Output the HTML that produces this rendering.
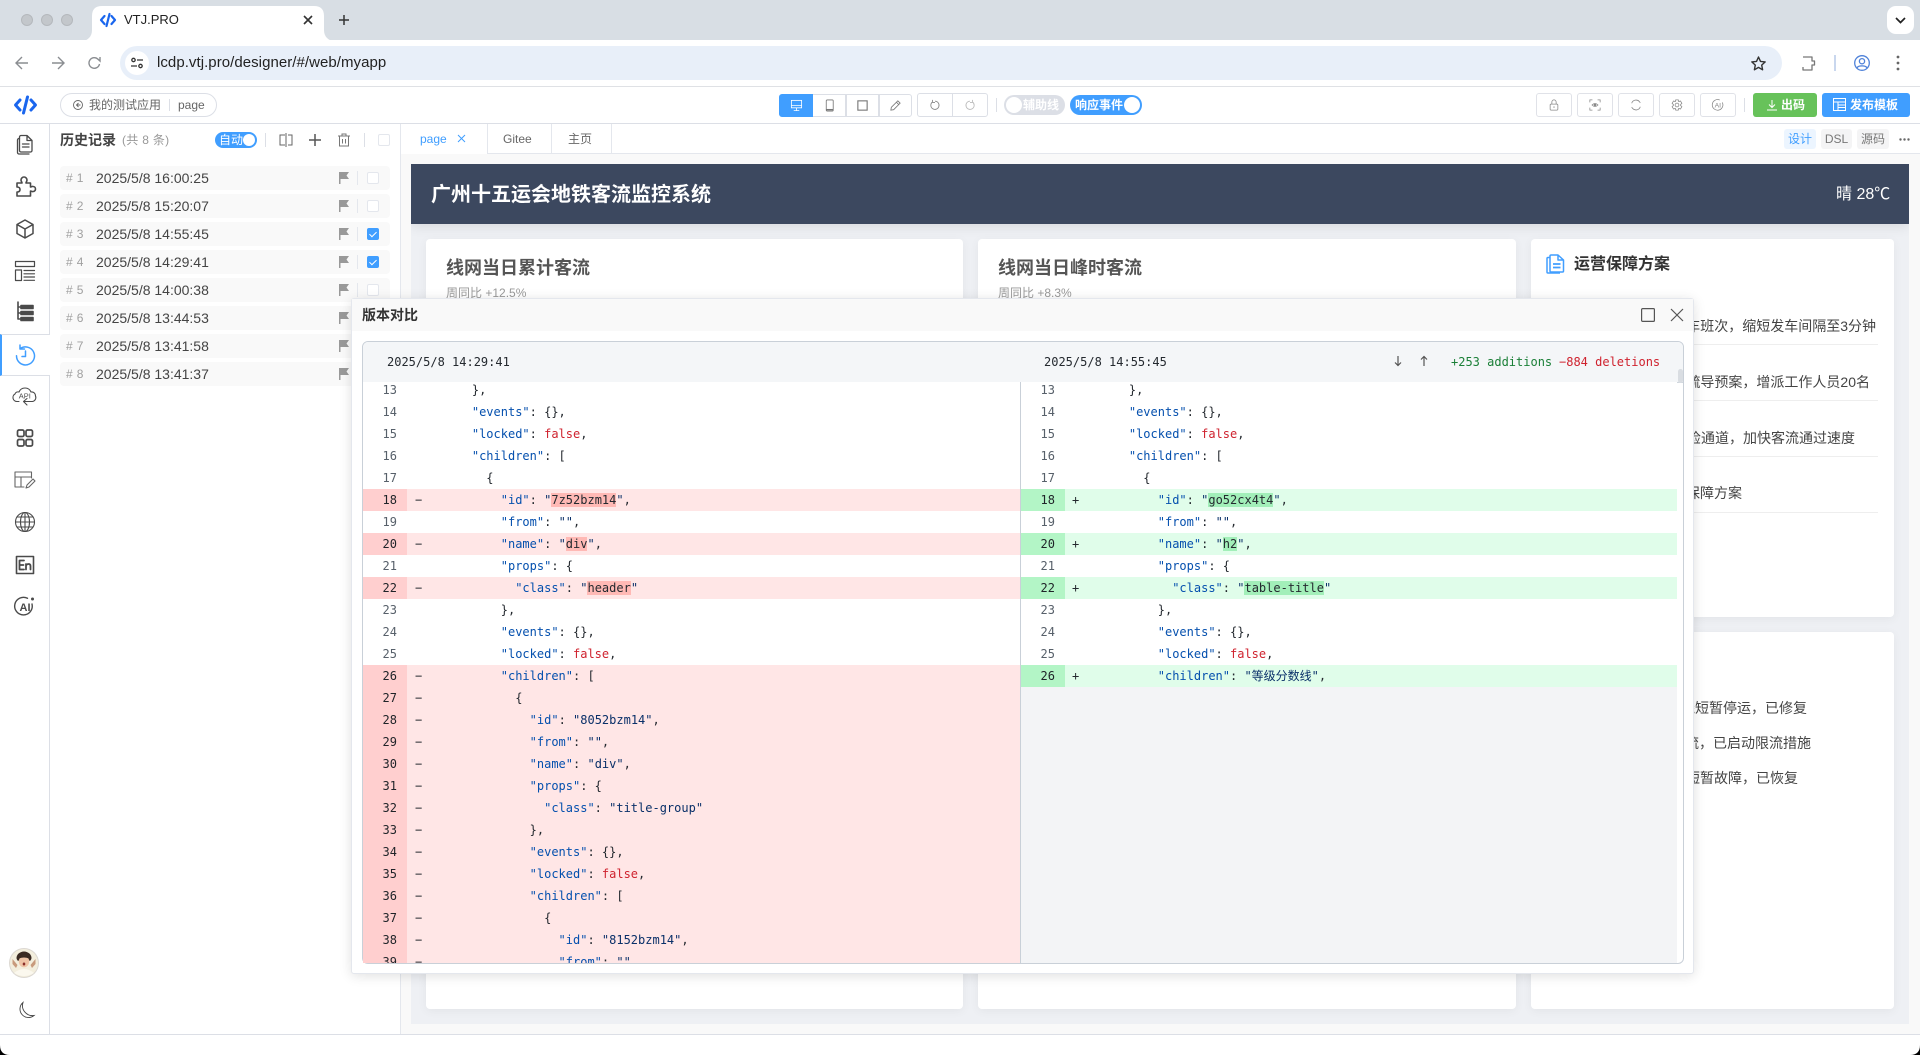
<!DOCTYPE html>
<html lang="zh"><head><meta charset="utf-8"><title>VTJ.PRO</title>
<style>
*{box-sizing:border-box}
html,body{margin:0;padding:0;width:1920px;height:1055px;overflow:hidden;background:#fff;font-family:"Liberation Sans","Noto Sans CJK SC",sans-serif;color:#333}
.a{position:absolute;white-space:nowrap}
svg{position:absolute;overflow:visible;fill:none;stroke:currentColor}
.ic{width:22px;height:22px;left:14px;color:#4a4a4a;stroke-width:1.3;stroke-linejoin:round;stroke-linecap:round}
.row{position:absolute;left:60px;width:330px;height:24px;background:#f9f9f9;border-radius:4px}
.row b{position:absolute;left:6px;top:0;font:12px/24px "Liberation Sans",sans-serif;color:#a0a0a0;font-weight:400;letter-spacing:.4px}
.row i{position:absolute;left:36px;top:0;font:14px/24px "Liberation Sans",sans-serif;color:#444}
.row svg{left:279px;top:6px;width:10px;height:12px;fill:#999;stroke:none}
.row s{position:absolute;left:297px;top:5px;width:1px;height:14px;background:#e4e7ed}
.row u{position:absolute;left:307px;top:6px;width:12px;height:12px;border:1px solid #e4e7ed;border-radius:2px;background:#fff}
.row u.c{background:#409eff;border-color:#409eff}
.row u.c:after{content:"";position:absolute;left:3px;top:1px;width:3px;height:6px;border:solid #fff;border-width:0 1px 1px 0;transform:rotate(45deg)}
.bt{position:absolute;top:93px;width:36px;height:24px;border:1px solid #e0e2e8;border-radius:3px;background:#fff;color:#888}
.bt svg{left:11px;top:5px;width:12px;height:12px;stroke-width:.9}
.gb{position:absolute;top:94px;height:23px;border:1px solid #dcdfe6;background:#fff;color:#777}
.gb svg{width:13px;height:13px;top:4px;left:10px;stroke-width:.9}
.card{position:absolute;background:#fff;border-radius:4px;box-shadow:0 2px 10px rgba(0,0,0,.05)}
.tt{font-size:18px;line-height:26px;font-weight:700;color:#555}
.sb{font-size:12px;line-height:16px;color:#999}
.ln{position:absolute;left:1545px;width:333px;height:1px;background:#eee}
.t14{font-size:14px;line-height:20px;color:#444;text-align:right}
.pane{position:absolute;top:382px;height:581px;overflow:hidden;font:12px/22px "DejaVu Sans Mono","Liberation Mono","Noto Sans CJK SC",monospace;color:#24292f}
.l{position:relative;height:22px;white-space:pre;background:#fff}
.l>em{position:absolute;top:0;left:0;width:44px;height:22px;font-style:normal;text-align:right;padding-right:10px;color:#57606a}
.l>u{position:absolute;top:0;left:52px;text-decoration:none}
.l>span{position:absolute;top:0;left:65.5px}
.rp .l>span{left:64.500px}
.rp .l>u{left:51px}
.d{background:#ffe6e6}.d>em{background:#ffcfcf;color:#1f2328}
.p{background:#e0fdea}.p>em{background:#b3f5c6;color:#1f2328}
.k{color:#0550ae}.s{color:#0a3069}.f{color:#cf222e}
.hd{background:#ffb9b5;color:#24292f}.ha{background:#a2efb9;color:#24292f}
</style></head><body>

<!-- chrome -->
<div class="a" style="left:0;top:0;width:1920px;height:40px;background:#d8dee4"></div>
<div class="a" style="left:21px;top:14px;width:12px;height:12px;border-radius:50%;background:#c3c7cb;border:1px solid #b4b8bc"></div>
<div class="a" style="left:41px;top:14px;width:12px;height:12px;border-radius:50%;background:#c3c7cb;border:1px solid #b4b8bc"></div>
<div class="a" style="left:61px;top:14px;width:12px;height:12px;border-radius:50%;background:#c3c7cb;border:1px solid #b4b8bc"></div>
<div class="a" style="left:0;top:40px;width:1920px;height:47px;background:#fff;border-radius:10px 10px 0 0;border-bottom:1px solid #dfe1e5"></div>
<svg style="left:80px;top:6px;width:256px;height:36px;stroke:none;fill:#fff" viewBox="0 0 256 36"><path d="M0 36 Q12 34 12 24 V10 Q12 0 22 0 H234 Q244 0 244 10 V24 Q244 34 256 36Z"/></svg>
<svg style="left:100px;top:12px;width:16px;height:16px;color:#1a66ee;stroke-width:2.2;stroke-linecap:round;stroke-linejoin:round" viewBox="0 0 16 16"><path d="M4.5 4 L1 8 L4.5 12 M11.5 4 L15 8 L11.5 12 M9.5 2 L6.5 14"/></svg>
<div class="a" style="left:124px;top:12px;font-size:13px;line-height:16px;color:#222">VTJ.PRO</div>
<svg style="left:304px;top:16px;width:8px;height:8px;color:#333;stroke-width:1.6" viewBox="0 0 8 8"><path d="M0 0L8 8M8 0L0 8"/></svg>
<svg style="left:339px;top:15px;width:10px;height:10px;color:#333;stroke-width:1.5" viewBox="0 0 10 10"><path d="M5 0V10M0 5H10"/></svg>
<div class="a" style="left:1887px;top:6px;width:27px;height:28px;background:#fff;border-radius:9px"></div>
<svg style="left:1896px;top:18px;width:9px;height:5px;color:#222;stroke-width:1.7" viewBox="0 0 9 5"><path d="M0 0L4.5 4.5L9 0"/></svg>

<svg style="left:15px;top:56px;width:14px;height:14px;color:#8a8d91;stroke-width:1.4" viewBox="0 0 14 14"><path d="M13 7H1M7 1L1 7L7 13"/></svg>
<svg style="left:51px;top:56px;width:14px;height:14px;color:#8a8d91;stroke-width:1.4" viewBox="0 0 14 14"><path d="M1 7H13M7 1L13 7L7 13"/></svg>
<svg style="left:88px;top:56px;width:13px;height:14px;color:#8a8d91;stroke-width:1.4" viewBox="0 0 13 14"><path d="M11.5 8A5.3 5.3 0 1 1 10 3.2L12 5V1"/></svg>
<div class="a" style="left:120px;top:46px;width:1662px;height:34px;background:#e8eff9;border-radius:17px"></div>
<div class="a" style="left:125px;top:51px;width:24px;height:24px;border-radius:50%;background:#fff"></div>
<svg style="left:131px;top:57px;width:12px;height:12px;color:#333;stroke-width:1.3" viewBox="0 0 12 12"><circle cx="2.5" cy="3" r="1.7"/><path d="M6 3H12M0 9H6"/><circle cx="9.5" cy="9" r="1.7"/></svg>
<div class="a" style="left:157px;top:54px;font-size:15px;line-height:18px;color:#222;letter-spacing:.05px">lcdp.vtj.pro/designer/#/web/myapp</div>
<svg style="left:1751px;top:56px;width:15px;height:15px;color:#333;stroke-width:1.4;stroke-linejoin:round" viewBox="0 0 15 15"><path d="M7.5 1L9.5 5.4L14.2 5.9L10.7 9.1L11.6 13.8L7.5 11.4L3.4 13.8L4.3 9.1L.8 5.9L5.5 5.4Z"/></svg>
<svg style="left:1801px;top:55px;width:16px;height:16px;color:#777;stroke-width:1.3;stroke-linejoin:round" viewBox="0 0 16 16"><path d="M2 2H11V6H13.500V10H11V15H2V12"/></svg>
<div class="a" style="left:1834px;top:55px;width:2px;height:16px;background:#c9d7ee"></div>
<svg style="left:1854px;top:55px;width:16px;height:16px;color:#4f82d9;stroke-width:1.3" viewBox="0 0 16 16"><circle cx="8" cy="8" r="7.3"/><circle cx="8" cy="6.2" r="2.6"/><path d="M3 13C4 10.2 12 10.2 13 13"/></svg>
<svg style="left:1896px;top:55px;width:4px;height:16px;stroke:none;fill:#666" viewBox="0 0 4 16"><circle cx="2" cy="2" r="1.4"/><circle cx="2" cy="8" r="1.4"/><circle cx="2" cy="14" r="1.4"/></svg>

<!-- app header -->
<div class="a" style="left:0;top:123px;width:1920px;height:1px;background:#dcdfe6"></div>
<svg style="left:14px;top:95px;width:23px;height:20px;color:#1a66ee;stroke-width:3;stroke-linecap:round;stroke-linejoin:round" viewBox="0 0 23 20"><path d="M6 5L1.5 10L6 15M17 5L21.5 10L17 15M13.500 2L9.500 18"/></svg>
<div class="a" style="left:60px;top:93px;width:157px;height:24px;border:1px solid #dcdfe6;border-radius:12px"></div>
<svg style="left:73px;top:100px;width:10px;height:10px;color:#666;stroke-width:.9" viewBox="0 0 10 10"><circle cx="5" cy="5" r="4.5"/><path d="M5.500 3L3.500 5L5.500 7M3.500 5H7.500"/></svg>
<div class="a" style="left:89px;top:97px;font-size:12px;line-height:16px;color:#666">我的测试应用</div>
<div class="a" style="left:169px;top:99px;width:1px;height:12px;background:#dcdfe6"></div>
<div class="a" style="left:178px;top:97px;font-size:12px;line-height:16px;color:#666">page</div>

<div class="gb" style="left:779px;width:34px;background:#409eff;border-color:#409eff;border-radius:3px 0 0 3px;color:#fff"><svg viewBox="0 0 14 14"><rect x="1.500" y="1.500" width="11" height="8"/><path d="M1.500 7H12.500M7 9.500V12.500M4 12.500H10"/></svg></div>
<div class="gb" style="left:813px;width:33px;border-left:0"><svg viewBox="0 0 14 14"><rect x="3.500" y="1" width="7.500" height="12" rx="1"/><path d="M3.500 11.500H11" stroke-width="1.500"/></svg></div>
<div class="gb" style="left:846px;width:33px;border-left:1px solid #dcdfe6"><svg viewBox="0 0 14 14" style="left:9px"><rect x="2" y="2" width="10" height="10" stroke-width="1.200"/></svg></div>
<div class="gb" style="left:879px;width:33px;border-radius:0 3px 3px 0"><svg viewBox="0 0 14 14" style="left:9px"><path d="M2.500 9L9.500 2L12 4.500L5 11.500L2 12Z M8 3.500L10.500 6"/></svg></div>
<div class="gb" style="left:917px;top:93px;height:24px;width:36px;border-radius:3px 0 0 3px;color:#888"><svg viewBox="0 0 14 14" style="left:11px;width:12px;height:12px;top:5px"><path d="M4 3.500A4.800 4.800 0 1 0 7 2.500M4 1V4H7" stroke-width="1"/></svg></div>
<div class="gb" style="left:952px;top:93px;height:24px;width:36px;border-radius:0 3px 3px 0;color:#bbb"><svg viewBox="0 0 14 14" style="left:11px;width:12px;height:12px;top:5px"><path d="M10 3.500A4.800 4.800 0 1 1 7 2.500M10 1V4H7" stroke-width="1"/></svg></div>
<div class="a" style="left:996px;top:98px;width:1px;height:14px;background:#dcdfe6"></div>
<div class="a" style="left:1004px;top:95px;width:61px;height:20px;border-radius:10px;background:#dcdfe6"></div>
<div class="a" style="left:1006px;top:97px;width:16px;height:16px;border-radius:50%;background:#fff"></div>
<div class="a" style="left:1023px;top:96px;font-size:12px;line-height:18px;color:#fff;font-weight:700">辅助线</div>
<div class="a" style="left:1070px;top:95px;width:72px;height:20px;border-radius:10px;background:#409eff"></div>
<div class="a" style="left:1124px;top:97px;width:16px;height:16px;border-radius:50%;background:#fff"></div>
<div class="a" style="left:1075px;top:96px;font-size:12px;line-height:18px;color:#fff;font-weight:700">响应事件</div>

<div class="bt" style="left:1536px"><svg viewBox="0 0 14 14"><rect x="2.500" y="6" width="9" height="7" rx="1"/><path d="M4.500 6V3.500A2.500 2.500 0 0 1 9.500 3.500V6M7 8.500V10.500"/></svg></div>
<div class="bt" style="left:1577px"><svg viewBox="0 0 14 14"><path d="M1 4V1H4M10 1H13V4M13 10V13H10M4 13H1V10"/><path d="M3.500 7Q7 3.500 10.500 7Q7 10.500 3.500 7Z"/><circle cx="7" cy="7" r="1" fill="#888"/></svg></div>
<div class="bt" style="left:1618px"><svg viewBox="0 0 14 14"><path d="M2 5A5.300 5.300 0 0 1 11 3L12 4.500M12 9A5.300 5.300 0 0 1 3 11L2 9.500"/></svg></div>
<div class="bt" style="left:1659px"><svg viewBox="0 0 14 14"><path d="M5.500 1H8.500L9 3L11 2.300L12.700 5L11.200 6.500V7.500L12.700 9L11 11.700L9 11L8.500 13H5.500L5 11L3 11.700L1.300 9L2.800 7.500V6.500L1.300 5L3 2.300L5 3Z"/><circle cx="7" cy="7" r="2.200"/></svg></div>
<div class="bt" style="left:1700px"><svg viewBox="0 0 14 14"><path d="M12 4A6.200 6.200 0 1 1 9 1.200"/><text x="6.800" y="10" text-anchor="middle" font-size="8" fill="currentColor" stroke="none" font-family="Liberation Sans">AI</text></svg></div>
<div class="a" style="left:1744px;top:98px;width:1px;height:14px;background:#dcdfe6"></div>
<div class="a" style="left:1753px;top:93px;width:64px;height:24px;background:#67c25a;border-radius:3px"></div>
<svg style="left:1766px;top:99px;width:12px;height:12px;color:#fff;stroke-width:1" viewBox="0 0 12 12"><path d="M6 1V8M3 5.500L6 8.500L9 5.500M1 11H11"/></svg>
<div class="a" style="left:1781px;top:96px;font-size:12px;line-height:18px;color:#fff;font-weight:700">出码</div>
<div class="a" style="left:1822px;top:93px;width:88px;height:24px;background:#409eff;border-radius:3px"></div>
<svg style="left:1833px;top:98px;width:13px;height:13px;color:#fff;stroke-width:1" viewBox="0 0 13 13"><rect x=".5" y=".5" width="12" height="12"/><path d="M.5 4H12.500M5 7H12.500M5 9.500H12.500M5 4V12.500"/></svg>
<div class="a" style="left:1850px;top:96px;font-size:12px;line-height:18px;color:#fff;font-weight:700;letter-spacing:0">发布模板</div>

<!-- left icon bar -->
<div class="a" style="left:49px;top:124px;width:1px;height:910px;background:#dcdfe6"></div>
<div class="a" style="left:400px;top:124px;width:1px;height:910px;background:#e4e7ed"></div>
<svg class="ic" style="top:133px" viewBox="0 0 22 22"><path d="M7 2.500H13L18 7.500V17.500A1.500 1.500 0 0 1 16.500 19H7A1.500 1.500 0 0 1 5.500 17.500V4A1.500 1.500 0 0 1 7 2.500Z M13 2.500V7.500H18 M8.500 11H15M8.500 14H15"/><path d="M5.500 5.500H5A1.500 1.500 0 0 0 3.500 7V19.500A1.500 1.500 0 0 0 5 21H15"/></svg>
<svg class="ic" style="top:176px;stroke-width:1.600" viewBox="0 0 22 22"><path d="M3 7H8C8 6 7 5.500 7 4A3 3 0 0 1 13 4C13 5.500 12 6 12 7H16.500V11C17.500 11 18 10 19 10.500A2.500 2.500 0 0 1 19 15.500C18 16 17.500 15 16.500 15V20H3V16C4.500 16 6 15.500 6 13.500S4.500 11 3 11Z"/></svg>
<svg class="ic" style="top:218px;stroke-width:1.500" viewBox="0 0 22 22"><path d="M11 2L19 6.500V15.500L11 20L3 15.500V6.500Z M3 6.500L11 11L19 6.500M11 11V20"/></svg>
<svg class="ic" style="top:260px;stroke-width:1.200" viewBox="0 0 22 22"><path d="M1.500 1.500H20.500V6.500H1.500Z M1.500 10H7.500V20.500H1.500Z M10 10.500H20.500M10 13.800H20.500M10 17H20.500M10 20.300H20.500"/></svg>
<svg class="ic" style="top:301px;stroke-width:1.600" viewBox="0 0 22 22"><path d="M4 1V18H7M4 6H7M4 12H7"/><path d="M7 4.500H19V7.500H7ZM7 10.500H19V13.500H7ZM7 16.500H19V19.500H7Z" fill="#4a4a4a"/></svg>
<div class="a" style="left:0;top:334px;width:49px;height:42px;background:#fff;border-top:1px solid #dcdfe6;border-bottom:1px solid #dcdfe6;border-left:2px solid #409eff"></div>
<div class="a" style="left:49px;top:335px;width:1px;height:40px;background:#fff"></div>
<svg class="ic" style="top:344px;color:#409eff;stroke-width:1.500" viewBox="0 0 22 22"><path d="M6 4.800A9 9 0 1 1 2.500 11.800M6 1V5H10.500M11.500 7V12.500H8"/></svg>
<svg class="ic" style="top:386px;left:12px;width:26px;height:21px;stroke-width:1.100" viewBox="0 0 26 21"><path d="M7 15.500H5A4 4 0 0 1 3 8C3.500 6.500 5 5.500 7 6A6.500 6.500 0 0 1 19 6C21.500 5.500 23.500 7.500 23.500 10A4 4 0 0 1 20.500 15.500H12"/><path d="M15 12.500L11.500 15.500L15 19"/><text x="12.800" y="12.300" text-anchor="middle" font-size="7.500" font-family="Liberation Sans" fill="#4a4a4a" stroke="none">API</text></svg>
<svg class="ic" style="top:427px;stroke-width:1.700" viewBox="0 0 22 22"><rect x="3.500" y="3" width="6.500" height="6.500" rx="1.600"/><rect x="12" y="3" width="6.500" height="6.500" rx="1.600"/><rect x="3.500" y="12.500" width="6.500" height="6.500" rx="1.600"/><rect x="12" y="12.500" width="6.500" height="6.500" rx="1.600"/></svg>
<svg class="ic" style="top:469px;stroke-width:1.100;color:#666" viewBox="0 0 22 22"><path d="M17.500 9V3H1V18H10M1 8H17.500M7 8V18"/><path d="M12 19L13 16L19 10L21 12L15 18Z"/></svg>
<svg class="ic" style="top:511px;stroke-width:1.100" viewBox="0 0 22 22"><circle cx="11" cy="11" r="9.500"/><ellipse cx="11" cy="11" rx="4.500" ry="9.500"/><path d="M11 1.500V20.500M1.500 11H20.500M3 6H19M3 16H19"/></svg>
<svg class="ic" style="top:554px" viewBox="0 0 22 22"><rect x="2.500" y="2.500" width="17" height="17" stroke-width="1.600"/><path d="M10 6.500H5.500V15.500H10M5.500 11H9.500M12 15.500V10M12 11.500Q13 10 14.500 10Q16.500 10 16.500 12V15.500" stroke-width="1.800"/></svg>
<svg class="ic" style="top:596px;stroke-width:1.400" viewBox="0 0 22 22"><path d="M18 8A8.800 8.800 0 1 1 13.500 2.300"/><text x="11" y="15" text-anchor="middle" font-size="11" font-family="Liberation Sans" font-weight="700" fill="#4a4a4a" stroke="none">AI</text><circle cx="18.500" cy="3" r=".8" fill="#4a4a4a"/></svg>
<svg style="left:9px;top:948px;width:30px;height:30px;stroke:none" viewBox="0 0 30 30"><circle cx="15" cy="15" r="15" fill="#dcd8d2"/><circle cx="15" cy="15" r="14" fill="#f3eedd"/><path d="M5 25Q15 17 25 25Q15 31 5 25Z" fill="#fbf8ee"/><path d="M9 6Q15 1 21 6Q24 10 21 13Q15 8 9 13Q6 10 9 6Z" fill="#3a2a22"/><ellipse cx="15" cy="13.500" rx="5.200" ry="5.800" fill="#efc4a6"/><path d="M10 9Q15 6 20 9V10.500Q15 8.500 10 10.500Z" fill="#3a2a22"/><path d="M3.500 11L8.500 17L7 20L3.500 16ZM26.500 11L21.500 17L23 20L26.500 16Z" fill="#c89a7c"/><ellipse cx="15" cy="16" rx="1.300" ry="1.500" fill="#8b2f2a"/></svg>
<svg style="left:16px;top:1001px;width:19px;height:19px;color:#444;stroke-width:.9" viewBox="0 0 19 19"><path d="M7 1.500A8.500 8.500 0 1 0 18 14.500A10 10 0 0 1 7 1.500Z"/></svg>

<!-- history panel -->
<div class="a" style="left:60px;top:130px;font-size:14px;line-height:20px;font-weight:700;color:#444">历史记录</div>
<div class="a" style="left:122px;top:132px;font-size:12px;line-height:16px;color:#999;letter-spacing:.3px">(共 8 条)</div>
<div class="a" style="left:215px;top:132px;width:42px;height:16px;border-radius:8px;background:#409eff"></div>
<div class="a" style="left:243px;top:134px;width:12px;height:12px;border-radius:50%;background:#fff"></div>
<div class="a" style="left:219px;top:132px;font-size:12px;line-height:16px;color:#fff">自动</div>
<div class="a" style="left:265px;top:133px;width:1px;height:14px;background:#dcdfe6"></div>
<svg style="left:279px;top:133px;width:14px;height:14px;color:#666;stroke-width:1" viewBox="0 0 14 14"><path d="M7 0V14M6 2H1V12H6M9 2H13V12H9" /></svg>
<svg style="left:309px;top:134px;width:12px;height:12px;color:#555;stroke-width:1.500" viewBox="0 0 12 12"><path d="M6 0V12M0 6H12"/></svg>
<svg style="left:338px;top:133px;width:12px;height:14px;color:#777;stroke-width:1" viewBox="0 0 12 14"><path d="M0 3H12M4 3V1H8V3M1.500 3V13H10.500V3M4.500 6V10.500M7.500 6V10.500"/></svg>
<div class="a" style="left:364px;top:133px;width:1px;height:14px;background:#dcdfe6"></div>
<div class="a" style="left:378px;top:134px;width:12px;height:12px;border:1px solid #e4e7ed;border-radius:2px"></div>

<div class="row" style="top:166px"><b># 1</b><i>2025/5/8 16:00:25</i><svg viewBox="0 0 10 12"><path d="M0 0H10L7.500 3.500L10 7H1.500V12H0Z"/></svg><s></s><u></u></div>
<div class="row" style="top:194px"><b># 2</b><i>2025/5/8 15:20:07</i><svg viewBox="0 0 10 12"><path d="M0 0H10L7.500 3.500L10 7H1.500V12H0Z"/></svg><s></s><u></u></div>
<div class="row" style="top:222px"><b># 3</b><i>2025/5/8 14:55:45</i><svg viewBox="0 0 10 12"><path d="M0 0H10L7.500 3.500L10 7H1.500V12H0Z"/></svg><s></s><u class="c"></u></div>
<div class="row" style="top:250px"><b># 4</b><i>2025/5/8 14:29:41</i><svg viewBox="0 0 10 12"><path d="M0 0H10L7.500 3.500L10 7H1.500V12H0Z"/></svg><s></s><u class="c"></u></div>
<div class="row" style="top:278px"><b># 5</b><i>2025/5/8 14:00:38</i><svg viewBox="0 0 10 12"><path d="M0 0H10L7.500 3.500L10 7H1.500V12H0Z"/></svg><s></s><u></u></div>
<div class="row" style="top:306px"><b># 6</b><i>2025/5/8 13:44:53</i><svg viewBox="0 0 10 12"><path d="M0 0H10L7.500 3.500L10 7H1.500V12H0Z"/></svg><s></s><u></u></div>
<div class="row" style="top:334px"><b># 7</b><i>2025/5/8 13:41:58</i><svg viewBox="0 0 10 12"><path d="M0 0H10L7.500 3.500L10 7H1.500V12H0Z"/></svg><s></s><u></u></div>
<div class="row" style="top:362px"><b># 8</b><i>2025/5/8 13:41:37</i><svg viewBox="0 0 10 12"><path d="M0 0H10L7.500 3.500L10 7H1.500V12H0Z"/></svg><s></s><u></u></div>

<!-- tabs -->
<div class="a" style="left:487px;top:153px;width:1433px;height:1px;background:#e4e7ed"></div>
<div class="a" style="left:487px;top:124px;width:1px;height:29px;background:#e4e7ed"></div>
<div class="a" style="left:551px;top:124px;width:1px;height:29px;background:#e4e7ed"></div>
<div class="a" style="left:611px;top:124px;width:1px;height:29px;background:#e4e7ed"></div>
<div class="a" style="left:420px;top:131px;font-size:12px;line-height:16px;color:#409eff">page</div>
<svg style="left:458px;top:135px;width:7px;height:7px;color:#409eff;stroke-width:1" viewBox="0 0 7 7"><path d="M0 0L7 7M7 0L0 7"/></svg>
<div class="a" style="left:503px;top:131px;font-size:12px;line-height:16px;color:#666">Gitee</div>
<div class="a" style="left:568px;top:131px;font-size:12px;line-height:16px;color:#666">主页</div>
<div class="a" style="left:1784px;top:129px;width:32px;height:20px;background:#ecf5ff;border-radius:3px;font-size:12px;line-height:20px;color:#409eff;text-align:center">设计</div>
<div class="a" style="left:1821px;top:129px;width:31px;height:20px;background:#f4f4f5;border-radius:3px;font-size:12px;line-height:20px;color:#777;text-align:center">DSL</div>
<div class="a" style="left:1857px;top:129px;width:32px;height:20px;background:#f4f4f5;border-radius:3px;font-size:12px;line-height:20px;color:#777;text-align:center">源码</div>
<svg style="left:1899px;top:138px;width:11px;height:3px;stroke:none;fill:#666" viewBox="0 0 11 3"><circle cx="1.500" cy="1.500" r="1.200"/><circle cx="5.500" cy="1.500" r="1.200"/><circle cx="9.500" cy="1.500" r="1.200"/></svg>

<!-- preview -->
<div class="a" style="left:401px;top:154px;width:1519px;height:880px;background:#f9f9f9"></div>
<div class="a" style="left:411px;top:164px;width:1498px;height:860px;background:#eef0f4;overflow:hidden">
  <div class="a" style="left:0;top:0;width:1498px;height:60px;background:#3c485f;box-shadow:0 2px 12px rgba(0,0,0,.1)"></div>
</div>
<div class="a" style="left:431px;top:181px;font-size:20px;line-height:28px;font-weight:700;color:#fff">广州十五运会地铁客流监控系统</div>
<div class="a" style="left:1836px;top:184px;font-size:16px;line-height:22px;color:#fff">晴 28℃</div>

<div class="card" style="left:426px;top:239px;width:537px;height:770px"></div>
<div class="card" style="left:978px;top:239px;width:538px;height:770px"></div>
<div class="card" style="left:1531px;top:239px;width:363px;height:378px"></div>
<div class="card" style="left:1531px;top:632px;width:363px;height:377px"></div>
<div class="a tt" style="left:446px;top:255px">线网当日累计客流</div>
<div class="a sb" style="left:446px;top:285px">周同比 +12.5%</div>
<div class="a tt" style="left:998px;top:255px">线网当日峰时客流</div>
<div class="a sb" style="left:998px;top:285px">周同比 +8.3%</div>
<svg style="left:1546px;top:254px;width:19px;height:20px;color:#409eff;stroke-width:1.500;stroke-linejoin:round" viewBox="0 0 19 20"><path d="M5 1H12L17.500 6V17A1 1 0 0 1 16.500 18H5A1 1 0 0 1 4 17V2A1 1 0 0 1 5 1Z M12 1V6H17.500"/><path d="M4 3.500H2A1 1 0 0 0 1 4.500V18A1 1 0 0 0 2 19H14"/><path d="M7 10H14.500M7 13.500H14.500" stroke-width="1.800"/></svg>
<div class="a" style="left:1574px;top:254px;font-size:16px;line-height:22px;font-weight:700;color:#333">运营保障方案</div>

<div class="a t14" style="right:44px;top:316px">增加列车班次，缩短发车间隔至3分钟</div><div class="ln" style="top:344px"></div>
<div class="a t14" style="right:50px;top:372px">启动客流疏导预案，增派工作人员20名</div><div class="ln" style="top:400px"></div>
<div class="a t14" style="right:65px;top:428px">开放备用安检通道，加快客流通过速度</div><div class="ln" style="top:456px"></div>
<div class="a t14" style="right:178px;top:483px">制定应急保障方案</div><div class="ln" style="top:512px"></div>
<div class="a t14" style="right:113px;top:698px">二号线短暂停运，已修复</div>
<div class="a t14" style="right:109px;top:733px">三号线大客流，已启动限流措施</div>
<div class="a t14" style="right:122px;top:768px">信号系统短暂故障，已恢复</div>

<!-- modal -->
<div class="a" style="left:351px;top:298px;width:1343px;height:676px;background:#fff;border:1px solid #e4e7ed;border-radius:3px;box-shadow:0 2px 12px rgba(0,0,0,.12)">
  <div class="a" style="left:0;top:0;width:1341px;height:32px;background:#f9f9f9"></div>
</div>
<div class="a" style="left:362px;top:305px;font-size:14px;line-height:20px;font-weight:700;color:#333">版本对比</div>
<svg style="left:1641px;top:308px;width:14px;height:14px;color:#555;stroke-width:1.200" viewBox="0 0 14 14"><rect x=".6" y=".6" width="12.800" height="12.800" rx="1"/></svg>
<svg style="left:1671px;top:309px;width:12px;height:12px;color:#555;stroke-width:1.200" viewBox="0 0 12 12"><path d="M0 0L12 12M12 0L0 12"/></svg>

<div class="a" style="left:362px;top:341px;width:1322px;height:623px;border:1px solid #c9d0d8;border-radius:6px;background:#fff;overflow:hidden">
  <div class="a" style="left:0;top:0;width:1320px;height:41px;background:#f4f6f8;border-bottom:1px solid #cfd6dd"></div>
  <div class="a" style="left:1315px;top:27px;width:5px;height:14px;background:#d9dde2;border-radius:3px"></div>
</div>
<div class="a" style="left:387px;top:353px;font:12px/18px 'DejaVu Sans Mono',monospace;color:#24292f">2025/5/8 14:29:41</div>
<div class="a" style="left:1044px;top:353px;font:12px/18px 'DejaVu Sans Mono',monospace;color:#24292f">2025/5/8 14:55:45</div>
<svg style="left:1394px;top:356px;width:8px;height:10px;color:#555;stroke-width:1.200" viewBox="0 0 8 10"><path d="M4 0V9.500M1 6.500L4 9.500L7 6.500"/></svg>
<svg style="left:1420px;top:356px;width:8px;height:10px;color:#555;stroke-width:1.200" viewBox="0 0 8 10"><path d="M4 10V.5M1 3.500L4 .5L7 3.500"/></svg>
<div class="a" style="left:1451px;top:353px;font:12px/18px 'DejaVu Sans Mono',monospace;color:#1a7f37">+253 additions</div>
<div class="a" style="left:1559px;top:353px;font:12px/18px 'DejaVu Sans Mono',monospace;color:#cf222e">−884 deletions</div>

<div class="a" style="left:1020px;top:382px;width:1px;height:581px;background:#c9d0d8;z-index:2"></div>

<div class="pane" style="left:363px;width:657px">
<div style="margin-top:-3px">
<div class="l"><em>13</em><span>      },</span></div>
<div class="l"><em>14</em><span>      <span class="k">"events"</span>: {},</span></div>
<div class="l"><em>15</em><span>      <span class="k">"locked"</span>: <span class="f">false</span>,</span></div>
<div class="l"><em>16</em><span>      <span class="k">"children"</span>: [</span></div>
<div class="l"><em>17</em><span>        {</span></div>
<div class="l d"><em>18</em><u>−</u><span>          <span class="k">"id"</span>: <span class="s">"<span class="hd">7z52bzm14</span>"</span>,</span></div>
<div class="l"><em>19</em><span>          <span class="k">"from"</span>: <span class="s">""</span>,</span></div>
<div class="l d"><em>20</em><u>−</u><span>          <span class="k">"name"</span>: <span class="s">"<span class="hd">div</span>"</span>,</span></div>
<div class="l"><em>21</em><span>          <span class="k">"props"</span>: {</span></div>
<div class="l d"><em>22</em><u>−</u><span>            <span class="k">"class"</span>: <span class="s">"<span class="hd">header</span>"</span></span></div>
<div class="l"><em>23</em><span>          },</span></div>
<div class="l"><em>24</em><span>          <span class="k">"events"</span>: {},</span></div>
<div class="l"><em>25</em><span>          <span class="k">"locked"</span>: <span class="f">false</span>,</span></div>
<div class="l d"><em>26</em><u>−</u><span>          <span class="k">"children"</span>: [</span></div>
<div class="l d"><em>27</em><u>−</u><span>            {</span></div>
<div class="l d"><em>28</em><u>−</u><span>              <span class="k">"id"</span>: <span class="s">"8052bzm14"</span>,</span></div>
<div class="l d"><em>29</em><u>−</u><span>              <span class="k">"from"</span>: <span class="s">""</span>,</span></div>
<div class="l d"><em>30</em><u>−</u><span>              <span class="k">"name"</span>: <span class="s">"div"</span>,</span></div>
<div class="l d"><em>31</em><u>−</u><span>              <span class="k">"props"</span>: {</span></div>
<div class="l d"><em>32</em><u>−</u><span>                <span class="k">"class"</span>: <span class="s">"title-group"</span></span></div>
<div class="l d"><em>33</em><u>−</u><span>              },</span></div>
<div class="l d"><em>34</em><u>−</u><span>              <span class="k">"events"</span>: {},</span></div>
<div class="l d"><em>35</em><u>−</u><span>              <span class="k">"locked"</span>: <span class="f">false</span>,</span></div>
<div class="l d"><em>36</em><u>−</u><span>              <span class="k">"children"</span>: [</span></div>
<div class="l d"><em>37</em><u>−</u><span>                {</span></div>
<div class="l d"><em>38</em><u>−</u><span>                  <span class="k">"id"</span>: <span class="s">"8152bzm14"</span>,</span></div>
<div class="l d"><em>39</em><u>−</u><span>                  <span class="k">"from"</span>: <span class="s">""</span></span></div>
</div></div>

<div class="pane rp" style="left:1021px;width:656px;background:#f3f4f6">
<div style="margin-top:-3px">
<div class="l"><em>13</em><span>      },</span></div>
<div class="l"><em>14</em><span>      <span class="k">"events"</span>: {},</span></div>
<div class="l"><em>15</em><span>      <span class="k">"locked"</span>: <span class="f">false</span>,</span></div>
<div class="l"><em>16</em><span>      <span class="k">"children"</span>: [</span></div>
<div class="l"><em>17</em><span>        {</span></div>
<div class="l p"><em>18</em><u>+</u><span>          <span class="k">"id"</span>: <span class="s">"<span class="ha">go52cx4t4</span>"</span>,</span></div>
<div class="l"><em>19</em><span>          <span class="k">"from"</span>: <span class="s">""</span>,</span></div>
<div class="l p"><em>20</em><u>+</u><span>          <span class="k">"name"</span>: <span class="s">"<span class="ha">h2</span>"</span>,</span></div>
<div class="l"><em>21</em><span>          <span class="k">"props"</span>: {</span></div>
<div class="l p"><em>22</em><u>+</u><span>            <span class="k">"class"</span>: <span class="s">"<span class="ha">table-title</span>"</span></span></div>
<div class="l"><em>23</em><span>          },</span></div>
<div class="l"><em>24</em><span>          <span class="k">"events"</span>: {},</span></div>
<div class="l"><em>25</em><span>          <span class="k">"locked"</span>: <span class="f">false</span>,</span></div>
<div class="l p"><em>26</em><u>+</u><span>          <span class="k">"children"</span>: <span class="s">"等级分数线"</span>,</span></div>
</div></div>

<!-- bottom -->
<div class="a" style="left:0;top:1034px;width:1920px;height:1px;background:#dcdfe6"></div>
<div class="a" style="left:0;top:1035px;width:1920px;height:20px;background:#fff"></div>
<svg style="left:0;top:1045px;width:10px;height:10px;stroke:none;fill:#000" viewBox="0 0 10 10"><path d="M0 0Q0 10 10 10H0Z"/></svg>
<svg style="left:1910px;top:1045px;width:10px;height:10px;stroke:none;fill:#000" viewBox="0 0 10 10"><path d="M10 0Q10 10 0 10H10Z"/></svg>
</body></html>
